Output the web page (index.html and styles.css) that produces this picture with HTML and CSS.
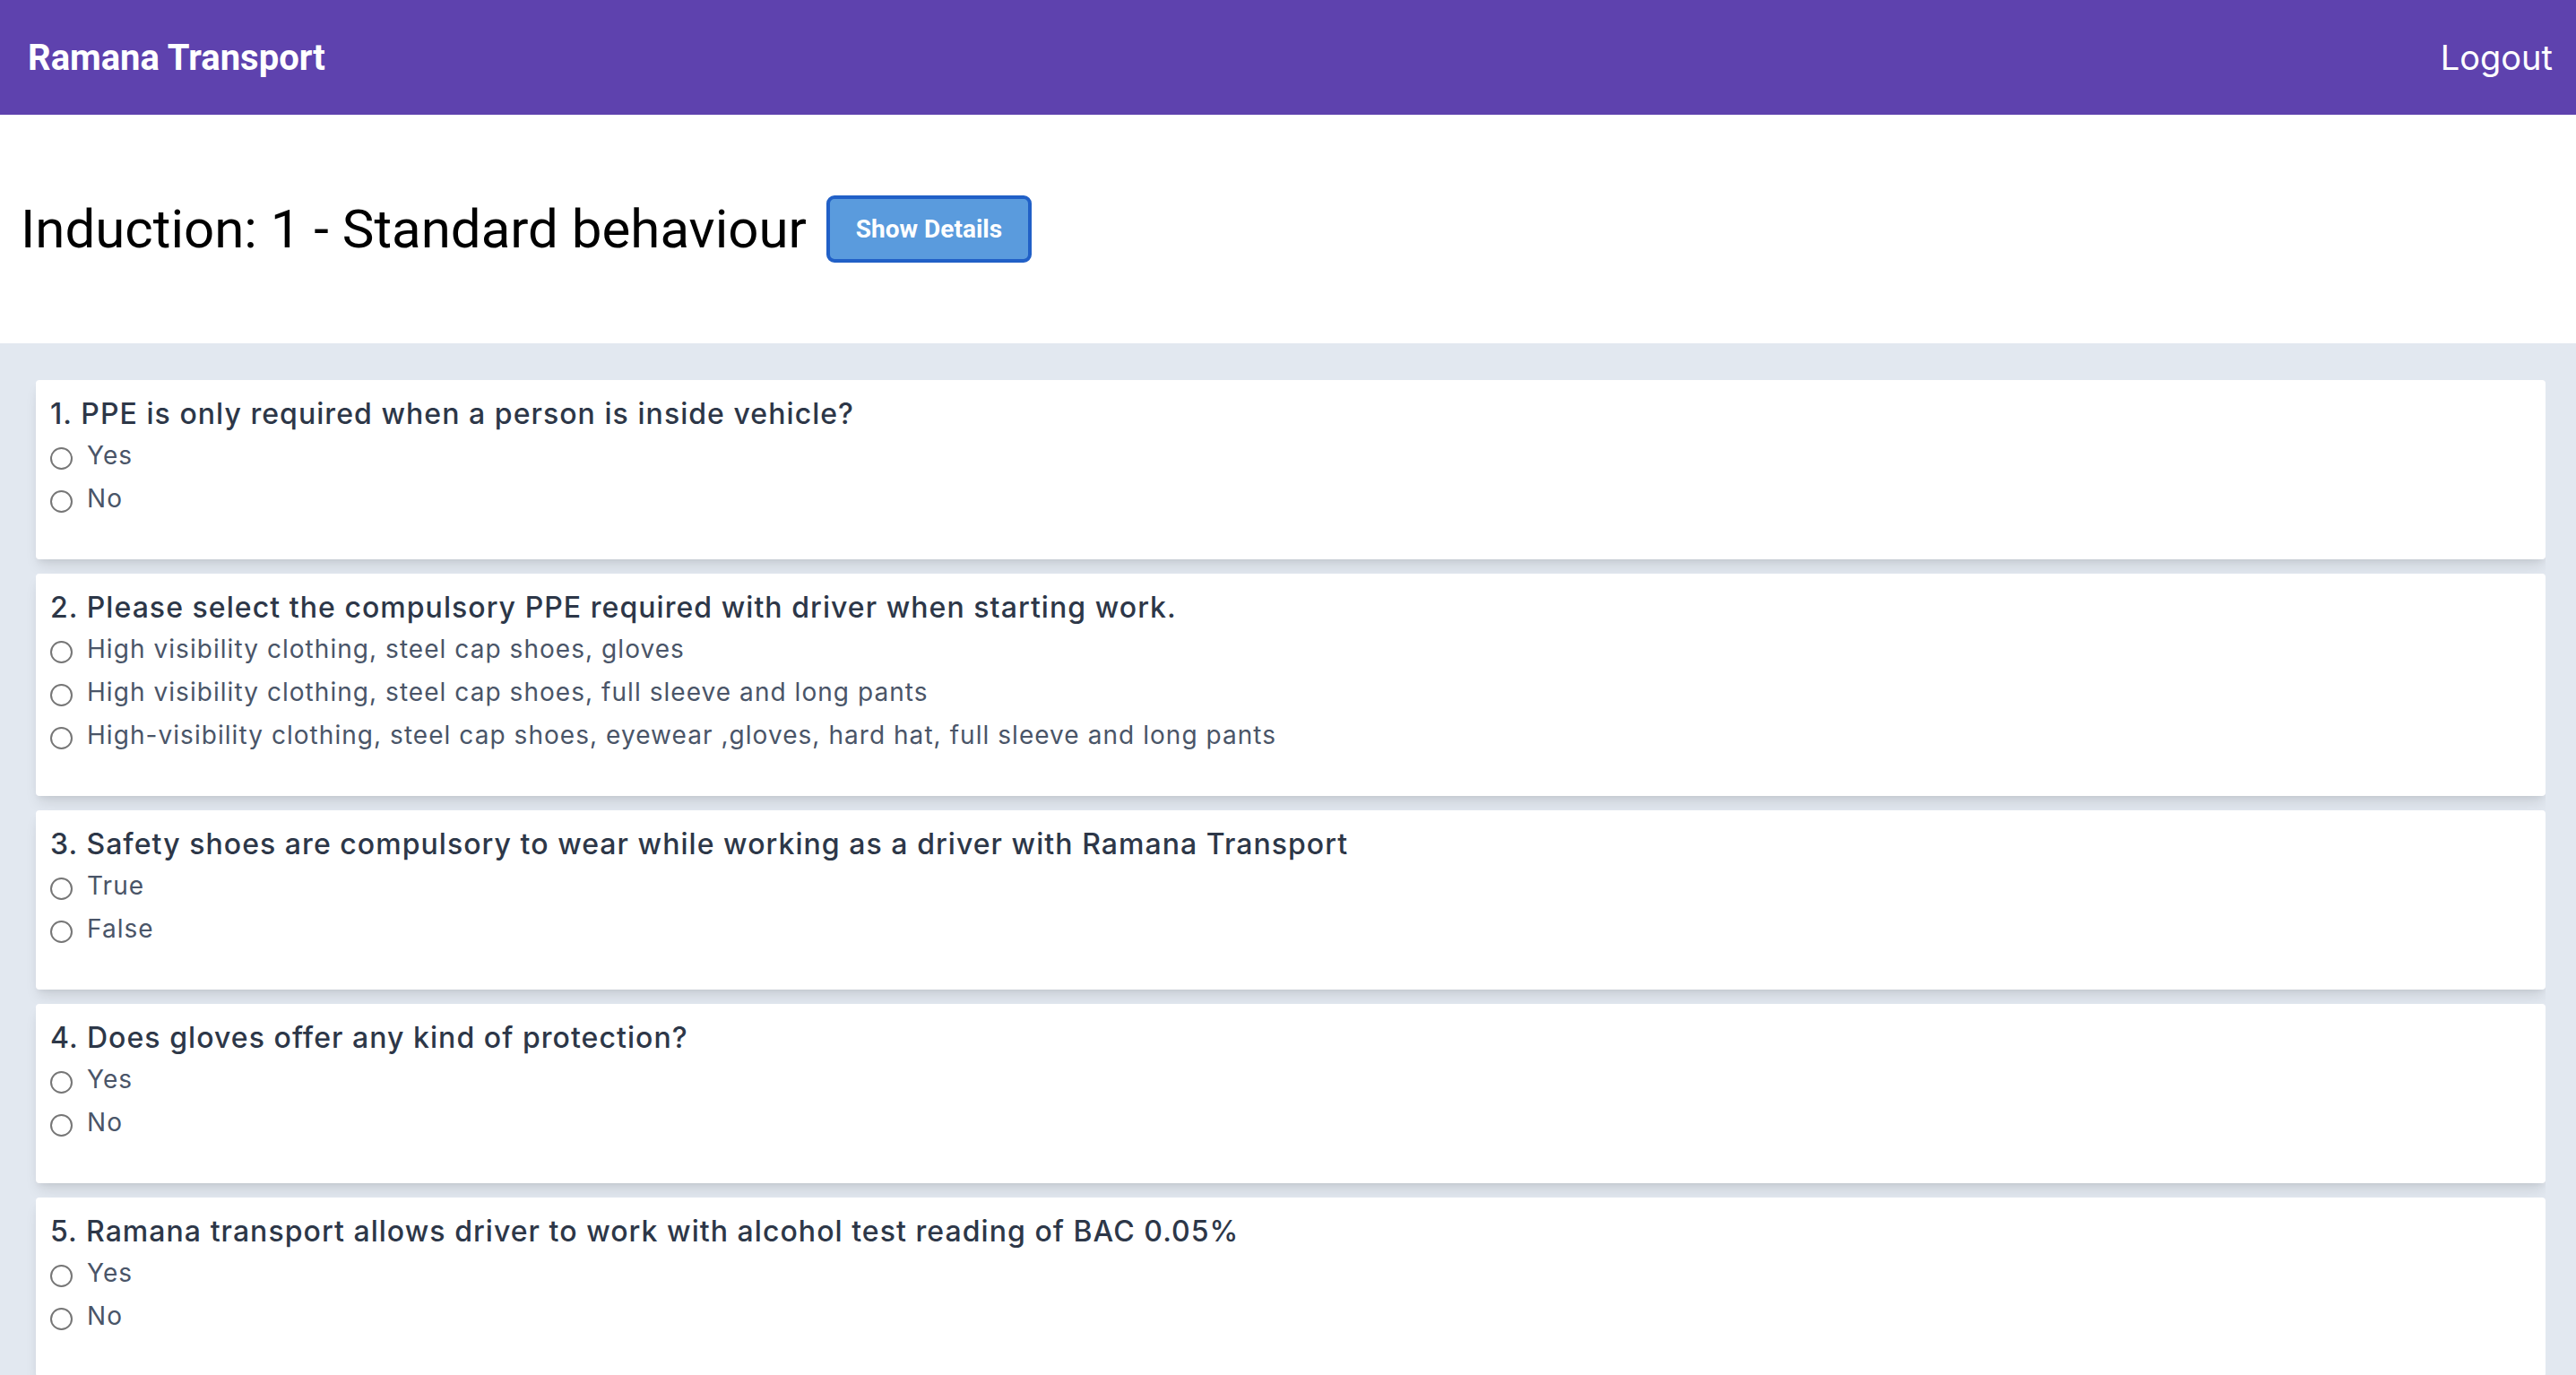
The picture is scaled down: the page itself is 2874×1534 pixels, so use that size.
FILE: index.html
```html
<!DOCTYPE html>
<html lang="en">
<head>
<meta charset="utf-8">
<title>Ramana Transport - Induction</title>
<link rel="stylesheet" href="styles.css">
</head>
<body>
<header class="topbar">
  <div class="brand">Ramana Transport</div>
  <a class="logout" href="#">Logout</a>
</header>
<section class="title-bar">
  <h1 class="page-title">Induction: 1 - Standard behaviour</h1>
  <button class="btn-details" type="button">Show Details</button>
</section>
<main class="questions">
  <div class="card">
    <p class="question">1. PPE is only required when a person is inside vehicle?</p>
    <label class="option"><input type="radio" name="q1"><span>Yes</span></label>
    <label class="option"><input type="radio" name="q1"><span>No</span></label>
  </div>
  <div class="card">
    <p class="question">2. Please select the compulsory PPE required with driver when starting work.</p>
    <label class="option"><input type="radio" name="q2"><span>High visibility clothing, steel cap shoes, gloves</span></label>
    <label class="option"><input type="radio" name="q2"><span>High visibility clothing, steel cap shoes, full sleeve and long pants</span></label>
    <label class="option"><input type="radio" name="q2"><span>High-visibility clothing, steel cap shoes, eyewear ,gloves, hard hat, full sleeve and long pants</span></label>
  </div>
  <div class="card">
    <p class="question">3. Safety shoes are compulsory to wear while working as a driver with Ramana Transport</p>
    <label class="option"><input type="radio" name="q3"><span>True</span></label>
    <label class="option"><input type="radio" name="q3"><span>False</span></label>
  </div>
  <div class="card">
    <p class="question">4. Does gloves offer any kind of protection?</p>
    <label class="option"><input type="radio" name="q4"><span>Yes</span></label>
    <label class="option"><input type="radio" name="q4"><span>No</span></label>
  </div>
  <div class="card">
    <p class="question">5. Ramana transport allows driver to work with alcohol test reading of BAC 0.05%</p>
    <label class="option"><input type="radio" name="q5"><span>Yes</span></label>
    <label class="option"><input type="radio" name="q5"><span>No</span></label>
  </div>
</main>
</body>
</html>
```
FILE: styles.css
```css
html, body {
  margin: 0;
  padding: 0;
}
body {
  background: #e2e8f0;
  font-family: Roboto, "Liberation Sans", sans-serif;
  height: 1534px;
  overflow: hidden;
  display: flex;
  flex-direction: column;
}
.topbar {
  height: 128px;
  flex: none;
  background: #5e42ae;
  display: flex;
  align-items: center;
  justify-content: space-between;
  padding: 0 26px 0 31px;
}
.brand {
  color: #ffffff;
  font-family: Roboto, sans-serif;
  font-weight: 700;
  font-size: 40px;
}
.logout {
  color: #ffffff;
  text-decoration: none;
  font-family: Inter, "Noto Sans", sans-serif;
  font-size: 38px;
}
.title-bar {
  height: 255px;
  flex: none;
  background: #ffffff;
  display: flex;
  align-items: center;
  gap: 22px;
  padding-left: 23px;
}
.page-title {
  margin: 0;
  font-family: Roboto, sans-serif;
  font-weight: 400;
  font-size: 60px;
  color: #000000;
}
.btn-details {
  height: 75px;
  box-sizing: border-box;
  padding: 0 29px;
  background: #5a9bdd;
  border: 4px solid #2160c7;
  border-radius: 9px;
  color: #ffffff;
  font-family: Roboto, sans-serif;
  font-weight: 700;
  font-size: 28px;
}
.questions {
  flex: 1;
  overflow: hidden;
  margin-right: 34px;
  padding: 41px 0 0 40px;
  display: flex;
  flex-direction: column;
  gap: 16px;
}
.card {
  flex: none;
  background: #ffffff;
  border-radius: 4px;
  box-shadow: 0 10px 15px -3px rgba(0, 0, 0, 0.1), 0 4px 6px -2px rgba(0, 0, 0, 0.05);
  padding: 16px 16px 44px 16px;
  font-family: Inter, "Noto Sans", sans-serif;
}
.question {
  margin: 0;
  font-size: 32px;
  line-height: 44px;
  font-weight: 500;
  letter-spacing: 1.05px;
  color: #2d3748;
}
.option {
  display: flex;
  align-items: center;
  height: 48px;
  gap: 16px;
  font-size: 28px;
  letter-spacing: 1.05px;
  color: #4a5568;
}
.option input {
  appearance: none;
  -webkit-appearance: none;
  margin: 7px 0 0 0;
  width: 25px;
  height: 25px;
  box-sizing: border-box;
  border: 2px solid #767676;
  border-radius: 50%;
  background: #ffffff;
}
```
